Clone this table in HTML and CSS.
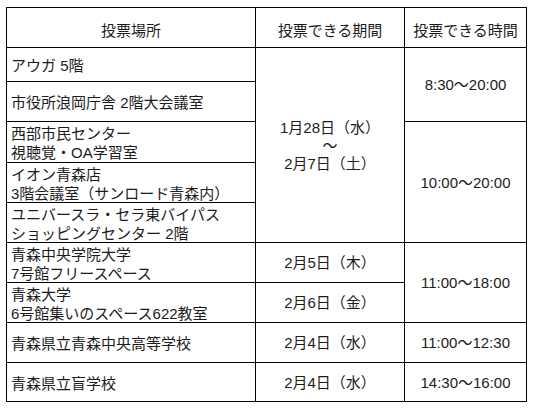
FILE: index.html
```html
<!DOCTYPE html>
<html lang="ja">
<head>
<meta charset="utf-8">
<title>投票場所</title>
<link rel="stylesheet" href="styles.css">
</head>
<body>
<div class="table">
  <div class="cell head">投票場所</div>
  <div class="cell head">投票できる期間</div>
  <div class="cell head">投票できる時間</div>

  <div class="cell place">アウガ 5階</div>
  <div class="cell center span5 period">1月28日（水）<br>～<br>2月7日（土）</div>
  <div class="cell center span2">8:30～20:00</div>

  <div class="cell place">市役所浪岡庁舎 2階大会議室</div>

  <div class="cell place">西部市民センター<br>視聴覚・OA学習室</div>
  <div class="cell center span3">10:00～20:00</div>

  <div class="cell place">イオン青森店<br>3階会議室（サンロード青森内）</div>

  <div class="cell place">ユニバースラ・セラ東バイパス<br>ショッピングセンター 2階</div>

  <div class="cell place">青森中央学院大学<br>7号館フリースペース</div>
  <div class="cell center">2月5日（木）</div>
  <div class="cell center span2">11:00～18:00</div>

  <div class="cell place">青森大学<br>6号館集いのスペース622教室</div>
  <div class="cell center">2月6日（金）</div>

  <div class="cell place">青森県立青森中央高等学校</div>
  <div class="cell center">2月4日（水）</div>
  <div class="cell center">11:00～12:30</div>

  <div class="cell place">青森県立盲学校</div>
  <div class="cell center">2月4日（水）</div>
  <div class="cell center">14:30～16:00</div>
</div>
</body>
</html>
```

FILE: styles.css
```css
html, body {
  margin: 0;
  padding: 0;
  background: #ffffff;
}

body {
  padding: 7px 0 0 6px;
  font-family: "Liberation Sans", "Noto Sans CJK JP", sans-serif;
  font-size: 15px;
  color: #1c1c1c;
}

.table {
  display: grid;
  grid-template-columns: 248px 148px 121px;
  grid-template-rows: 39px 33px 39px 40px 39px 39px 39px 39px 39px 38px;
  gap: 1px;
  padding: 1px;
  background: #000000;
  width: max-content;
}

.cell {
  background: #ffffff;
  display: flex;
  flex-direction: column;
  justify-content: center;
  line-height: 19px;
}

.head {
  align-items: center;
  text-align: center;
  padding-top: 5px;
}

.place {
  padding-left: 4px;
  padding-top: 2px;
  text-align: left;
}

.center {
  align-items: center;
  text-align: center;
}

.period {
  line-height: 18px;
  padding-top: 2px;
}

.span2 { grid-row: span 2; }
.span3 { grid-row: span 3; }
.span5 { grid-row: span 5; }
```
